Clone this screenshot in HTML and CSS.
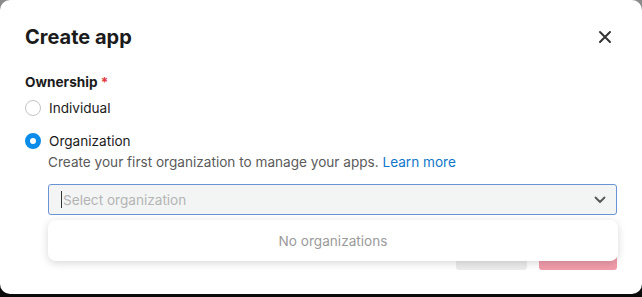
FILE: index.html
```html
<!DOCTYPE html>
<html lang="en">
<head>
    <meta charset="UTF-8">
    <title>Create app</title>
    <link rel="stylesheet" href="styles.css">
</head>
<body>
    <div class="modal">
        <div class="modal-header">
            <h2>Create app</h2>
            <button class="close-btn" aria-label="Close">
                <svg width="14" height="14" viewBox="0 0 14 14"><path d="M2 2L12 12M12 2L2 12" stroke="#333" stroke-width="2" stroke-linecap="round"/></svg>
            </button>
        </div>

        <div class="field">
            <label class="field-label">Ownership <span class="req">*</span></label>
            <label class="radio">
                <span class="radio-dot"></span>
                Individual
            </label>
            <label class="radio">
                <span class="radio-dot checked"></span>
                Organization
            </label>
            <div class="org-block">
                <p class="hint">Create your first organization to manage your apps. <a href="#">Learn more</a></p>
                <div class="select-wrap">
                    <div class="select">
                        <span class="caret"></span>
                        <span class="placeholder">Select organization</span>
                        <svg class="chevron" width="12" height="8" viewBox="0 0 12 8"><path d="M1.5 1.5L6 6L10.5 1.5" fill="none" stroke="#555" stroke-width="1.8" stroke-linecap="round" stroke-linejoin="round"/></svg>
                    </div>
                    <div class="dropdown">No organizations</div>
                </div>
            </div>
        </div>

        <div class="modal-footer">
            <button class="btn btn-cancel">Cancel</button>
            <button class="btn btn-create" disabled>Create</button>
        </div>
    </div>
</body>
</html>
```

FILE: styles.css
```css
html, body {
    margin: 0;
    height: 100%;
}
body {
    background: linear-gradient(#8c8c8c, #3a3a3a 60%, #0a0a0a);
    font-family: "Inter", "Noto Sans", sans-serif;
    color: #1b1b1b;
}
.modal {
    background: #fff;
    height: 294px;
    border-radius: 10px;
    padding: 25px 25px 0 25px;
    box-sizing: border-box;
    position: relative;
}
.modal-header {
    display: flex;
    justify-content: space-between;
    align-items: center;
    margin-bottom: 24px;
}
.modal-header h2 {
    margin: 0;
    font-size: 20px;
    font-weight: 700;
    line-height: 24px;
}
.close-btn {
    background: none;
    border: none;
    padding: 0;
    margin-right: 5px;
    width: 14px;
    height: 14px;
    cursor: pointer;
}
.field-label {
    display: block;
    font-size: 13.6px;
    font-weight: 700;
    line-height: 18px;
    margin-bottom: 7px;
}
.req {
    color: #e0383e;
}
.radio {
    display: flex;
    align-items: center;
    gap: 8px;
    font-size: 13.6px;
    line-height: 20px;
    height: 20px;
    margin-bottom: 13px;
}
.radio-dot {
    width: 14px;
    height: 14px;
    border: 1px solid #c4c4c4;
    border-radius: 50%;
    box-sizing: content-box;
}
.radio-dot.checked {
    width: 6px;
    height: 6px;
    border: 5px solid #0b8ce9;
    background: #fff;
}
.org-block {
    padding-left: 23px;
    margin-top: -12px;
}
.hint {
    margin: 0 0 12px 0;
    font-size: 13.6px;
    line-height: 20px;
    color: #5a5a5a;
}
.hint a {
    color: #0f76c9;
    text-decoration: none;
}
.select-wrap {
    position: relative;
}
.select {
    display: flex;
    align-items: center;
    height: 31px;
    border: 1px solid #6a93d6;
    border-radius: 3px;
    background: #f3f4f4;
    padding: 0 10px 0 12px;
    box-sizing: border-box;
    font-size: 13.6px;
}
.caret {
    width: 1px;
    height: 17px;
    background: #333;
    margin-right: 1px;
}
.placeholder {
    color: #b4b4b4;
    flex: 1;
}
.dropdown {
    position: absolute;
    left: 0;
    right: -1px;
    top: 36px;
    height: 41px;
    background: #fff;
    border-radius: 8px;
    box-shadow: 0 2px 8px rgba(0, 0, 0, 0.16);
    display: flex;
    align-items: center;
    justify-content: center;
    font-size: 13.6px;
    color: #9a9a9a;
    z-index: 2;
}
.modal-footer {
    display: flex;
    justify-content: flex-end;
    gap: 12px;
    margin-top: 25px;
    margin-right: 0;
}
.btn {
    height: 30px;
    border: none;
    border-radius: 3px;
    font-family: inherit;
    font-size: 14px;
    color: transparent;
}
.btn-cancel {
    width: 71px;
    background: #ececec;
}
.btn-create {
    width: 78px;
    background: #f19cab;
}
```
